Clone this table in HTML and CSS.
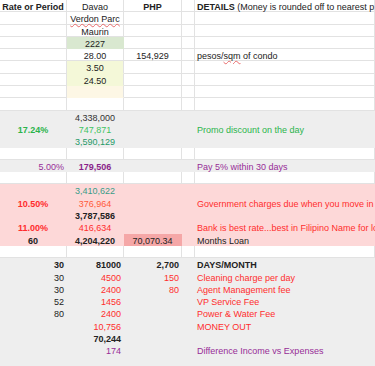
FILE: index.html
```html
<!DOCTYPE html>
<html>
<head>
<meta charset="utf-8">
<link rel="stylesheet" href="styles.css">
</head>
<body>
<div class="sheet">
  <div class="row">
    <div class="c ctr b">Rate or Period</div>
    <div class="c ctr">Davao</div>
    <div class="c ctr b">PHP</div>
    <div class="c"></div>
    <div class="c l"><span class="b">DETAILS</span> (Money is rounded off to nearest p</div>
  </div>
  <div class="row">
    <div class="c"></div>
    <div class="c ctr"><span class="spell">Verdon Parc</span></div>
    <div class="c"></div><div class="c"></div><div class="c"></div>
  </div>
  <div class="row">
    <div class="c"></div>
    <div class="c ctr"><span class="spell">Maurin</span></div>
    <div class="c"></div><div class="c"></div><div class="c"></div>
  </div>
  <div class="row">
    <div class="c"></div>
    <div class="c ctr fill-green">2227</div>
    <div class="c"></div><div class="c"></div><div class="c"></div>
  </div>
  <div class="row">
    <div class="c"></div>
    <div class="c ctr">28.00</div>
    <div class="c ctr">154,929</div>
    <div class="c"></div>
    <div class="c l">pesos/<span class="spell">sqm</span> of condo</div>
  </div>
  <div class="row">
    <div class="c"></div>
    <div class="c ctr fill-yellow">3.50</div>
    <div class="c"></div><div class="c"></div><div class="c"></div>
  </div>
  <div class="row">
    <div class="c"></div>
    <div class="c ctr fill-yellow">24.50</div>
    <div class="c"></div><div class="c"></div><div class="c"></div>
  </div>
  <div class="row">
    <div class="c"></div>
    <div class="c fill-cream"></div>
    <div class="c"></div><div class="c"></div><div class="c"></div>
  </div>
  <div class="row">
    <div class="c"></div><div class="c"></div><div class="c"></div><div class="c"></div><div class="c"></div>
  </div>

  <div class="row gray">
    <div class="c"></div>
    <div class="c ctr dark">4,338,000</div>
    <div class="c"></div><div class="c"></div><div class="c"></div>
  </div>
  <div class="row gray">
    <div class="c ctr b green">17.24%</div>
    <div class="c ctr lgreen">747,871</div>
    <div class="c"></div><div class="c"></div>
    <div class="c l green">Promo discount on the day</div>
  </div>
  <div class="row gray">
    <div class="c"></div>
    <div class="c ctr teal">3,590,129</div>
    <div class="c"></div><div class="c"></div><div class="c"></div>
  </div>
  <div class="row">
    <div class="c"></div><div class="c"></div><div class="c"></div><div class="c"></div><div class="c"></div>
  </div>
  <div class="row gray">
    <div class="c r purple">5.00%</div>
    <div class="c ctr b dpurple">179,506</div>
    <div class="c"></div><div class="c"></div>
    <div class="c l purple">Pay 5% within 30 days</div>
  </div>
  <div class="row">
    <div class="c"></div><div class="c"></div><div class="c"></div><div class="c"></div><div class="c"></div>
  </div>

  <div class="row pink">
    <div class="c"></div>
    <div class="c ctr teal2">3,410,622</div>
    <div class="c"></div><div class="c"></div><div class="c"></div>
  </div>
  <div class="row pink">
    <div class="c ctr b red">10.50%</div>
    <div class="c ctr orange">376,964</div>
    <div class="c"></div><div class="c"></div>
    <div class="c l red">Government charges due when you move in</div>
  </div>
  <div class="row pink">
    <div class="c"></div>
    <div class="c ctr b">3,787,586</div>
    <div class="c"></div><div class="c"></div><div class="c"></div>
  </div>
  <div class="row pink">
    <div class="c ctr b red">11.00%</div>
    <div class="c ctr red">416,634</div>
    <div class="c"></div><div class="c"></div>
    <div class="c l red">Bank is best rate...best in Filipino Name for loan</div>
  </div>
  <div class="row pink">
    <div class="c ctr b">60</div>
    <div class="c ctr b">4,204,220</div>
    <div class="c ctr fill-rose">70,070.34</div>
    <div class="c"></div>
    <div class="c l">Months Loan</div>
  </div>
  <div class="row">
    <div class="c"></div><div class="c"></div><div class="c"></div><div class="c"></div><div class="c"></div>
  </div>

  <div class="row gray">
    <div class="c r b">30</div>
    <div class="c r b">81000</div>
    <div class="c r b">2,700</div>
    <div class="c"></div>
    <div class="c l b">DAYS/MONTH</div>
  </div>
  <div class="row gray">
    <div class="c r">30</div>
    <div class="c r red">4500</div>
    <div class="c r red">150</div>
    <div class="c"></div>
    <div class="c l red">Cleaning charge per day</div>
  </div>
  <div class="row gray">
    <div class="c r">30</div>
    <div class="c r red">2400</div>
    <div class="c r red">80</div>
    <div class="c"></div>
    <div class="c l red">Agent Management fee</div>
  </div>
  <div class="row gray">
    <div class="c r">52</div>
    <div class="c r red">1456</div>
    <div class="c"></div><div class="c"></div>
    <div class="c l red">VP Service Fee</div>
  </div>
  <div class="row gray">
    <div class="c r">80</div>
    <div class="c r red">2400</div>
    <div class="c"></div><div class="c"></div>
    <div class="c l red">Power &amp; Water Fee</div>
  </div>
  <div class="row gray">
    <div class="c"></div>
    <div class="c r red">10,756</div>
    <div class="c"></div><div class="c"></div>
    <div class="c l red">MONEY OUT</div>
  </div>
  <div class="row gray">
    <div class="c"></div>
    <div class="c r b">70,244</div>
    <div class="c"></div><div class="c"></div><div class="c"></div>
  </div>
  <div class="row gray">
    <div class="c"></div>
    <div class="c r purple">174</div>
    <div class="c"></div><div class="c"></div>
    <div class="c l purple">Difference Income vs Expenses</div>
  </div>
  <div class="row gray">
    <div class="c"></div><div class="c"></div><div class="c"></div><div class="c"></div><div class="c"></div>
  </div>
</div>
</body>
</html>
```
FILE: styles.css
```css
* { box-sizing: border-box; }
html, body {
  margin: 0;
  padding: 0;
  background: #ffffff;
  overflow: hidden;
}
.sheet {
  width: 375px;
  font-family: "Liberation Sans", Arial, sans-serif;
  font-size: 9px;
  color: #222222;
}
.row {
  display: grid;
  grid-template-columns: 67px 57px 58px 13px 180px;
  height: 12.3px;
}
.c {
  height: 12.3px;
  line-height: 10px;
  padding: 2px 2px 0 2px;
  border-right: 1px solid #e2e2e2;
  border-bottom: 1px solid #e2e2e2;
  white-space: nowrap;
}
.ctr { text-align: center; }
.r { text-align: right; }
.b { font-weight: bold; }

.row.gray { background: #eeeeee; }
.row.pink { background: #fdd8d8; }
.row.gray .c, .row.pink .c { border-color: transparent; }

.fill-green { background: #d9e8d0; border-color: #d9e8d0; }
.fill-yellow { background: #f4f8d8; border-bottom-color: #f4f8d8; }
.fill-cream { background: #fdf7e5; border-bottom-color: #fdf7e5; }
.row .c.fill-rose { background: #f5a7a7; }

.spell {
  text-decoration-line: underline;
  text-decoration-style: wavy;
  text-decoration-color: #e86a6a;
  text-decoration-thickness: 1px;
  text-underline-offset: 1px;
}

.dark { color: #333333; }
.green { color: #2bb44c; }
.lgreen { color: #3ec35e; }
.teal { color: #1f9a68; }
.teal2 { color: #3a9c88; }
.purple { color: #972d97; }
.dpurple { color: #8a1f8a; }
.red { color: #ff2d2d; }
.orange { color: #ff5a3a; }
```
